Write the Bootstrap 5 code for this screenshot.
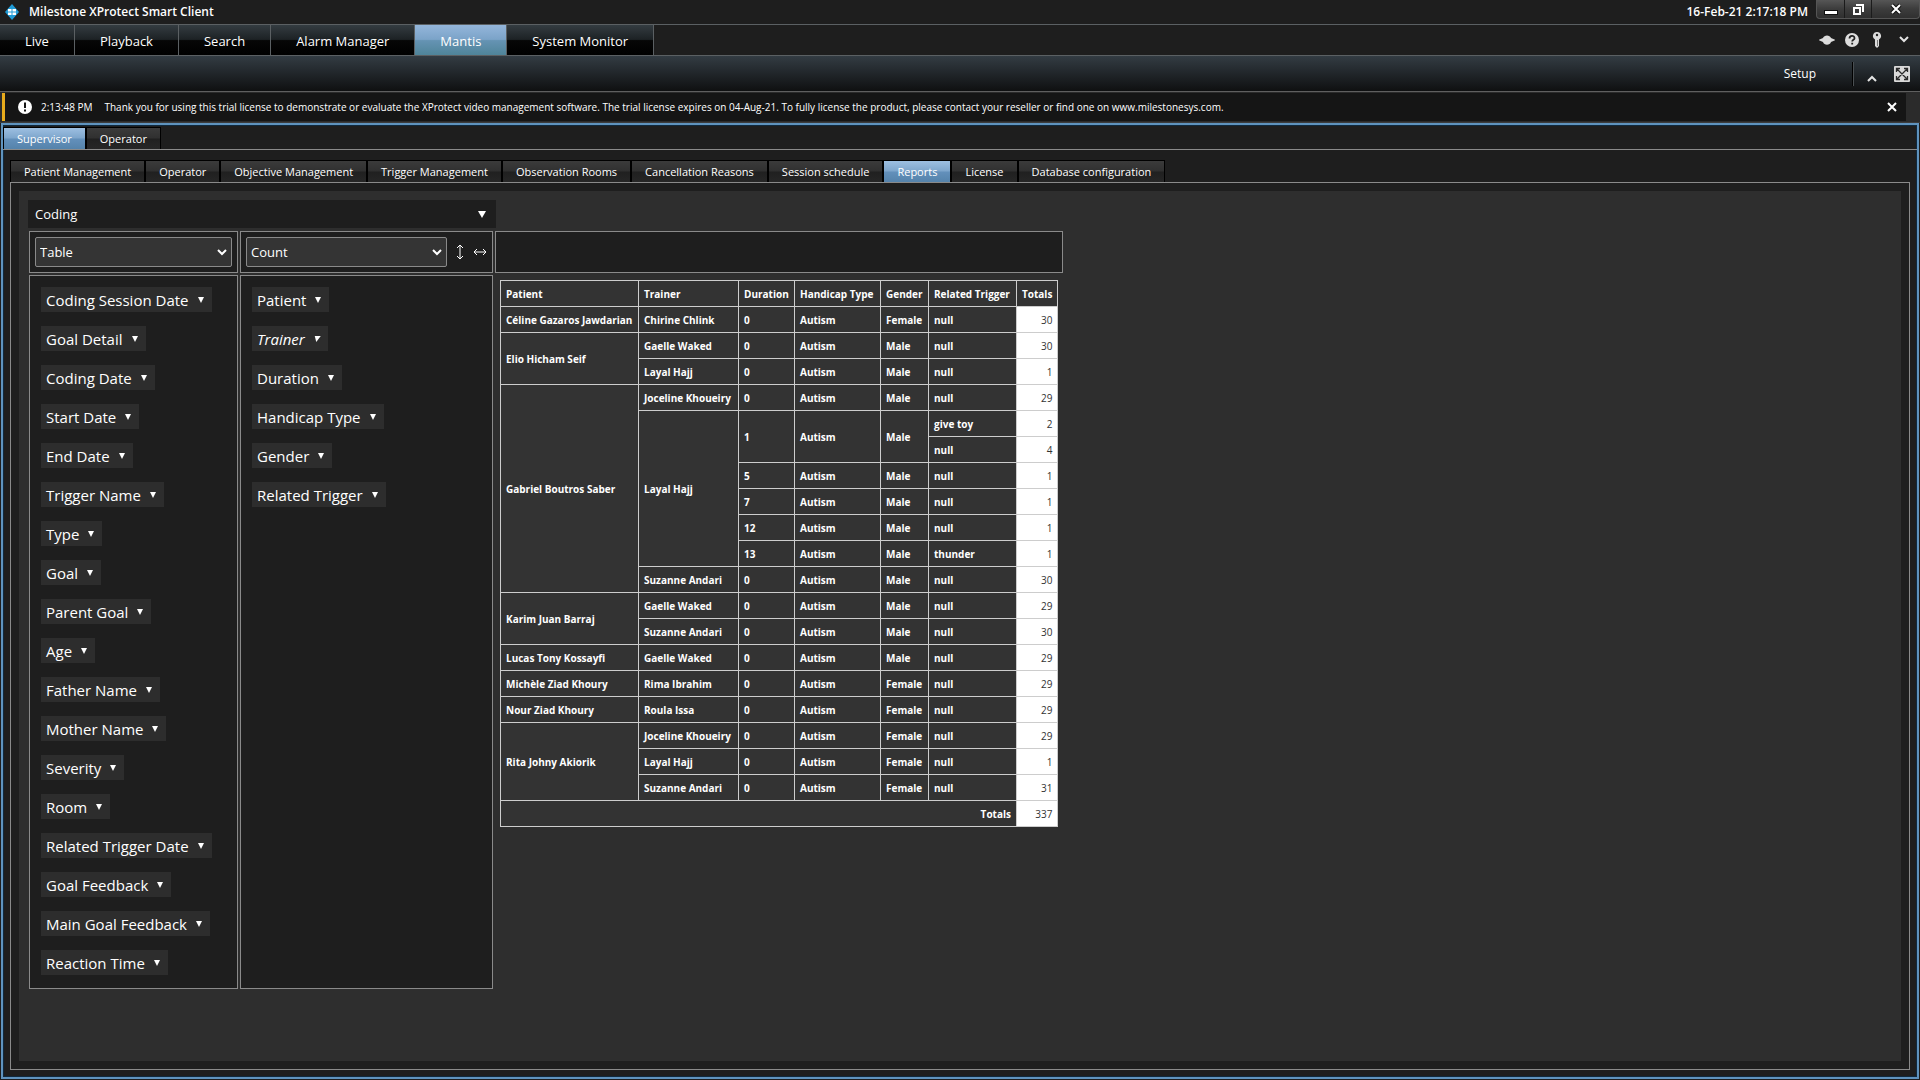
<!DOCTYPE html>
<html lang="en" data-bs-theme="dark">
<head>
<meta charset="utf-8">
<meta name="viewport" content="width=device-width, initial-scale=1">
<title>Milestone XProtect Smart Client</title>
<link rel="stylesheet" href="https://cdn.jsdelivr.net/npm/bootstrap@5.3.0/dist/css/bootstrap.min.css">
<script src="https://cdn.jsdelivr.net/npm/bootstrap@5.3.0/dist/js/bootstrap.bundle.min.js"></script>
<style>
  :root { --ink: #1e1e1e; --panel: #2e2e2e; --rule: #8a8a8a; --edge: #5f93be; }
  body { background: var(--ink); color: #fff; font-family: "Open Sans", "Noto Sans", sans-serif; font-size: 13px; line-height: 18px; }
  button { border: 0; background: none; color: inherit; padding: 0; }
  svg { display: block; }

  /* title bar */
  .title-bar { height: 24px; font-size: 12px; font-weight: 600; line-height: 24px; }
  .window-buttons { height: 19px; border: 1px solid #555; border-top: 0; border-radius: 0 0 4px 4px; background: linear-gradient(#565656, #3c3c3c 50%, #303030); }
  .window-buttons button { width: 27px; }
  .window-buttons button + button { border-left: 1px solid #1b1b1b; }
  .window-buttons .close-window { width: 48px; }

  /* main tabs */
  .main-tabs { border-top: 1px solid #5b6063; border-bottom: 1px solid #5b6063; }
  .main-tabs .nav-link { height: 30px; padding: 0 25px; line-height: 32px; font-size: 13px; color: #fff; border-radius: 0; border-right: 1px solid #5b6063; background: linear-gradient(#343c41, #1d2225 48%, #060606 52%, #000); }
  .main-tabs .nav-link.active { background: linear-gradient(#94b6db, #7ba3c8 48%, #6593b3 52%, #4f8499); }
  .status-icons { padding-right: 10px; }

  .tool-row { height: 35px; padding-right: 2px; background: linear-gradient(#333c43, #0f1011); font-size: 12px; }
  .tool-split { width: 2px; height: 24px; background: #000; border-right: 1px solid #4a4f52; }

  /* licence notice */
  .notice { border-top: 1px solid #5f5f5f; border-bottom: 1px solid #3c3c3c; background: #2b2b2b; font-size: 10px; padding: 1px 14px 1px 2px; }
  .notice-body { height: 28px; background: #151515; border-left: 3px solid #e8ab1c; }

  /* workspace */
  .workspace { margin: 0 1px 1px; border: 2px solid var(--edge); box-shadow: inset 0 0 0 1px #10293d; padding-top: 2px; }
  .sub-tabs .nav-link { height: 22px; padding: 0 13px; line-height: 22px; font-size: 11px; color: #fff; border-radius: 0; border: 1px solid #000; border-bottom: 0; background: linear-gradient(#3b3b3b, #303030 48%, #202020 52%, #262626); }
  .sub-tabs .nav-link.active { background: linear-gradient(#9dbfe1, #7ea6cc 48%, #6390bb 52%, #5583ab); }
  .outer-pane { border-top: 1px solid var(--rule); padding: 10px 7px 7px; }
  .inner-pane { border: 1px solid var(--rule); padding: 8px; }
  .report { background: var(--panel); padding: 9px; }

  .coding-select { width: 468px; height: 28px; font-size: 13px; line-height: 18px; padding: 5px 32px 5px 7px; color: #fff; border: 0; border-radius: 0; background: var(--ink) url("data:image/svg+xml,%3Csvg xmlns='http://www.w3.org/2000/svg' width='8' height='7'%3E%3Cpath d='M0 0h8L4 7z' fill='%23fff'/%3E%3C/svg%3E") no-repeat right 10px center / 8px 7px; }
  .pivot { display: grid; grid-template-columns: 209px 253px auto; gap: 2px; justify-content: start; margin: 3px 0 0 1px; }
  .pivot-box { background: var(--ink); border: 1px solid var(--rule); }
  .pivot-box.controls { height: 42px; padding: 5px; gap: 9px; }
  .pivot-select { height: 30px; font-size: 13px; line-height: 18px; padding: 5px 24px 5px 4px; color: #fff; border: 1px solid #8a8a8a; border-radius: 2px; background: #343434 url("data:image/svg+xml,%3Csvg xmlns='http://www.w3.org/2000/svg' width='10' height='7'%3E%3Cpath d='M1 1l4 4 4-4' fill='none' stroke='%23fff' stroke-width='2'/%3E%3C/svg%3E") no-repeat right 4px center / 10px 7px; }
  .field-list { padding: 11px 11px 13px; gap: 14px; }
  .field-chip { height: 25px; padding: 0 8px 0 5px; gap: 9px; font-size: 15px; line-height: 24px; background: #2d2d2d; }
  .field-chip::after { content: ""; border: 3px solid transparent; border-top: 6px solid #fff; border-bottom: 0; }
  .field-chip.filtered { font-style: italic; }
  .field-chip.filtered::after { transform: skewX(-14deg); }

  .pivot-table { border-collapse: collapse; margin: 5px; font-size: 10px; font-weight: 700; line-height: 14px; color: #fff; }
  .pivot-table th, .pivot-table td { height: 26px; padding: 0 5px; border: 1px solid #cdcdcd; white-space: nowrap; background: #333; }
  .pivot-table td { background: #fff; color: #333; font-weight: 400; text-align: right; }
</style>
</head>
<body class="d-flex flex-column min-vh-100">

<header>
  <div class="title-bar d-flex align-items-center">
    <svg class="ms-1" width="17" height="18" viewBox="0 0 17 18"><path d="M8 1l7 8-7 8-7-8z" fill="#1f9bd7"/><path d="M4 6h8v6H4z" fill="#fff"/><path d="M8 6v6M4 9h8" stroke="#1f9bd7"/></svg>
    <span class="ms-2">Milestone XProtect Smart Client</span>
    <span class="ms-auto me-2">16-Feb-21 2:17:18 PM</span>
    <div class="window-buttons d-flex align-self-start">
      <button type="button" class="d-flex align-items-center justify-content-center" aria-label="Minimize"><svg width="14" height="14"><path d="M0 8h14v5H0z" fill="#111"/><path d="M1 9h12v3H1z" fill="#fff"/></svg></button>
      <button type="button" class="d-flex align-items-center justify-content-center" aria-label="Restore"><svg width="13" height="13" fill="none" stroke="#fff" stroke-width="2"><path d="M5 3V2h6v6h-1M2 5h6v6H2z"/></svg></button>
      <button type="button" class="close-window d-flex align-items-center justify-content-center" aria-label="Close"><svg width="12" height="12" stroke-width="2"><path d="M2 2l8 8M10 2l-8 8" stroke="#111" stroke-width="4"/><path d="M2 2l8 8M10 2l-8 8" stroke="#fff"/></svg></button>
    </div>
  </div>

  <div class="main-tabs d-flex">
    <nav class="nav" aria-label="Main">
      <a class="nav-link" href="#">Live</a><a class="nav-link" href="#">Playback</a><a class="nav-link" href="#">Search</a><a class="nav-link" href="#">Alarm Manager</a><a class="nav-link active" href="#" aria-current="page">Mantis</a><a class="nav-link" href="#">System Monitor</a>
    </nav>
    <div class="status-icons d-flex align-items-center ms-auto gap-2">
      <button type="button" aria-label="Status"><svg width="18" height="10" fill="#dcdcdc"><path d="M5 3C6-.5 12-.5 13 3l3.500 1.500c.7.4.7.6 0 1L13 7c-1 3.500-7 3.500-8 0L1.500 5.500c-.7-.4-.7-.6 0-1z"/></svg></button>
      <button type="button" aria-label="Help"><svg width="16" height="16"><circle cx="8" cy="8" r="7" fill="#dedede"/><path d="M5.500 6.500C5.500 3 10.500 3 10.500 6.200c0 1.600-2.300 1.600-2.300 3.300M8.200 10.700v1.800" fill="none" stroke="#222" stroke-width="1.800"/></svg></button>
      <button type="button" class="ms-1" aria-label="Login information"><svg width="10" height="16"><path d="M5 0a4 4 0 0 1 2 7.500V14l-2 2-2-2V7.500A4 4 0 0 1 5 0z" fill="#dcdcdc"/><circle cx="5" cy="3" r="1.200" fill="#222"/><path d="M5.500 8v6" stroke="#777"/></svg></button>
      <button type="button" class="ms-2" aria-label="More"><svg width="12" height="8" fill="none" stroke="#e4e4e4" stroke-width="2"><path d="M2 1l4 4 4-4"/></svg></button>
    </div>
  </div>

  <div class="tool-row d-flex align-items-center justify-content-end">
    <button type="button" class="me-4 pe-2">Setup</button>
    <span class="tool-split ms-1"></span>
    <button type="button" class="mx-2 ps-1 pt-2" aria-label="Collapse"><svg width="12" height="8" fill="none" stroke="#e4e4e4" stroke-width="2"><path d="M2 7l4-4 4 4"/></svg></button>
    <button type="button" class="mx-2" aria-label="Full screen"><svg width="16" height="16"><rect width="16" height="16" rx="1" fill="#d9d9d9"/><path d="M2.500 6V2.500H6M10 2.500h3.500V6M13.500 10v3.500H10M6 13.500H2.500V10M3 3l10 10M13 3L3 13" fill="none" stroke="#2a2a2a" stroke-width="1.300"/></svg></button>
  </div>
</header>

<div class="notice">
  <div class="notice-body d-flex align-items-center ps-2" role="status">
    <svg class="ms-1 me-2" width="16" height="16"><circle cx="8" cy="8" r="7" fill="#fff"/><path d="M8 3.500v5.500M8 10.500v2" stroke="#151515" stroke-width="2"/></svg>
    <span class="me-2">2:13:48 PM</span>
    <span class="ms-1">Thank you for using this trial license to demonstrate or evaluate the XProtect video management software. The trial license expires on 04-Aug-21. To fully license the product, please contact your reseller or find one on www.milestonesys.com.</span>
    <button type="button" class="ms-auto me-2" aria-label="Dismiss"><svg width="12" height="12" stroke="#fff" stroke-width="2"><path d="M2 2l8 8M10 2l-8 8"/></svg></button>
  </div>
</div>

<main class="workspace d-flex flex-column flex-grow-1">
  <nav class="nav sub-tabs" aria-label="Role">
    <a class="nav-link active" href="#" aria-current="page">Supervisor</a><a class="nav-link" href="#">Operator</a>
  </nav>
  <div class="outer-pane d-flex flex-column flex-grow-1">
    <nav class="nav sub-tabs" aria-label="Supervisor pages">
      <a class="nav-link" href="#">Patient Management</a><a class="nav-link" href="#">Operator</a><a class="nav-link" href="#">Objective Management</a><a class="nav-link" href="#">Trigger Management</a><a class="nav-link" href="#">Observation Rooms</a><a class="nav-link" href="#">Cancellation Reasons</a><a class="nav-link" href="#">Session schedule</a><a class="nav-link active" href="#" aria-current="page">Reports</a><a class="nav-link" href="#">License</a><a class="nav-link" href="#">Database configuration</a>
    </nav>
    <div class="inner-pane d-flex flex-column flex-grow-1">
      <section class="report flex-grow-1">
        <select class="form-select coding-select" aria-label="Report"><option>Coding</option></select>

        <div class="pivot">
          <div class="pivot-box controls">
            <select class="form-select pivot-select" aria-label="Renderer"><option>Table</option></select>
          </div>
          <div class="pivot-box controls d-flex align-items-center">
            <select class="form-select pivot-select flex-grow-1 w-auto" aria-label="Aggregator"><option>Count</option></select>
            <a href="#" aria-label="Row order"><svg width="8" height="16" fill="none" stroke="#fff"><path d="M4 1v14M1 4l3-3 3 3M1 12l3 3 3-3"/></svg></a>
            <a href="#" aria-label="Column order"><svg width="14" height="8" fill="none" stroke="#fff"><path d="M1 4h12M4 1L1 4l3 3M10 1l3 3-3 3"/></svg></a>
          </div>
          <div class="pivot-box controls"></div>

          <div class="pivot-box field-list d-flex flex-column align-items-start">
            <button type="button" class="field-chip d-flex align-items-center">Coding Session Date</button>
            <button type="button" class="field-chip d-flex align-items-center">Goal Detail</button>
            <button type="button" class="field-chip d-flex align-items-center">Coding Date</button>
            <button type="button" class="field-chip d-flex align-items-center">Start Date</button>
            <button type="button" class="field-chip d-flex align-items-center">End Date</button>
            <button type="button" class="field-chip d-flex align-items-center">Trigger Name</button>
            <button type="button" class="field-chip d-flex align-items-center">Type</button>
            <button type="button" class="field-chip d-flex align-items-center">Goal</button>
            <button type="button" class="field-chip d-flex align-items-center">Parent Goal</button>
            <button type="button" class="field-chip d-flex align-items-center">Age</button>
            <button type="button" class="field-chip d-flex align-items-center">Father Name</button>
            <button type="button" class="field-chip d-flex align-items-center">Mother Name</button>
            <button type="button" class="field-chip d-flex align-items-center">Severity</button>
            <button type="button" class="field-chip d-flex align-items-center">Room</button>
            <button type="button" class="field-chip d-flex align-items-center">Related Trigger Date</button>
            <button type="button" class="field-chip d-flex align-items-center">Goal Feedback</button>
            <button type="button" class="field-chip d-flex align-items-center">Main Goal Feedback</button>
            <button type="button" class="field-chip d-flex align-items-center">Reaction Time</button>
          </div>
          <div class="pivot-box field-list d-flex flex-column align-items-start">
            <button type="button" class="field-chip d-flex align-items-center">Patient</button>
            <button type="button" class="field-chip filtered d-flex align-items-center">Trainer</button>
            <button type="button" class="field-chip d-flex align-items-center">Duration</button>
            <button type="button" class="field-chip d-flex align-items-center">Handicap Type</button>
            <button type="button" class="field-chip d-flex align-items-center">Gender</button>
            <button type="button" class="field-chip d-flex align-items-center">Related Trigger</button>
          </div>

          <div>
            <table class="pivot-table">
              <colgroup><col style="width:138px"><col style="width:100px"><col style="width:56px"><col style="width:86px"><col style="width:48px"><col style="width:88px"><col style="width:41px"></colgroup>
              <thead>
                <tr><th>Patient</th><th>Trainer</th><th>Duration</th><th>Handicap Type</th><th>Gender</th><th>Related Trigger</th><th>Totals</th></tr>
              </thead>
              <tbody>
                <tr><th>Céline Gazaros Jawdarian</th><th>Chirine Chlink</th><th>0</th><th>Autism</th><th>Female</th><th>null</th><td>30</td></tr>
                <tr><th rowspan="2">Elio Hicham Seif</th><th>Gaelle Waked</th><th>0</th><th>Autism</th><th>Male</th><th>null</th><td>30</td></tr>
                <tr><th>Layal Hajj</th><th>0</th><th>Autism</th><th>Male</th><th>null</th><td>1</td></tr>
                <tr><th rowspan="8">Gabriel Boutros Saber</th><th>Joceline Khoueiry</th><th>0</th><th>Autism</th><th>Male</th><th>null</th><td>29</td></tr>
                <tr><th rowspan="6">Layal Hajj</th><th rowspan="2">1</th><th rowspan="2">Autism</th><th rowspan="2">Male</th><th>give toy</th><td>2</td></tr>
                <tr><th>null</th><td>4</td></tr>
                <tr><th>5</th><th>Autism</th><th>Male</th><th>null</th><td>1</td></tr>
                <tr><th>7</th><th>Autism</th><th>Male</th><th>null</th><td>1</td></tr>
                <tr><th>12</th><th>Autism</th><th>Male</th><th>null</th><td>1</td></tr>
                <tr><th>13</th><th>Autism</th><th>Male</th><th>thunder</th><td>1</td></tr>
                <tr><th>Suzanne Andari</th><th>0</th><th>Autism</th><th>Male</th><th>null</th><td>30</td></tr>
                <tr><th rowspan="2">Karim Juan Barraj</th><th>Gaelle Waked</th><th>0</th><th>Autism</th><th>Male</th><th>null</th><td>29</td></tr>
                <tr><th>Suzanne Andari</th><th>0</th><th>Autism</th><th>Male</th><th>null</th><td>30</td></tr>
                <tr><th>Lucas Tony Kossayfi</th><th>Gaelle Waked</th><th>0</th><th>Autism</th><th>Male</th><th>null</th><td>29</td></tr>
                <tr><th>Michèle Ziad Khoury</th><th>Rima Ibrahim</th><th>0</th><th>Autism</th><th>Female</th><th>null</th><td>29</td></tr>
                <tr><th>Nour Ziad Khoury</th><th>Roula Issa</th><th>0</th><th>Autism</th><th>Female</th><th>null</th><td>29</td></tr>
                <tr><th rowspan="3">Rita Johny Akiorik</th><th>Joceline Khoueiry</th><th>0</th><th>Autism</th><th>Female</th><th>null</th><td>29</td></tr>
                <tr><th>Layal Hajj</th><th>0</th><th>Autism</th><th>Female</th><th>null</th><td>1</td></tr>
                <tr><th>Suzanne Andari</th><th>0</th><th>Autism</th><th>Female</th><th>null</th><td>31</td></tr>
                <tr><th colspan="6" class="text-end">Totals</th><td>337</td></tr>
              </tbody>
            </table>
          </div>
        </div>
      </section>
    </div>
  </div>
</main>
</body>
</html>
